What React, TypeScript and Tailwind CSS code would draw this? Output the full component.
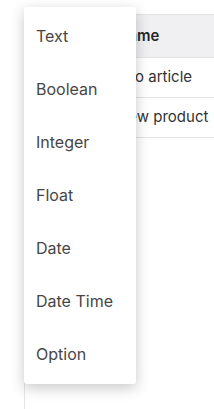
import React from "react";

const items = ["Text", "Boolean", "Integer", "Float", "Date", "Date Time", "Option"];

export default function App() {
  return (
    <div
      className="relative w-[214px] h-[409px] overflow-hidden bg-white"
      style={{ fontFamily: "Inter, 'Noto Sans', sans-serif" }}
    >
      <div className="pt-[14px] pl-[24px] h-full">
        <div className="w-[400px] h-full border-l border-t border-[#e4e4e7]">
          <div className="flex h-[43px] items-center bg-[#f0f0f2] border-b border-[#e4e4e7] pl-[92px] text-[15px] font-semibold text-[#27272a]">
            Name
          </div>
          <div className="flex h-[40px] items-center border-b border-[#e4e4e7] pl-[92px] text-[15px] text-[#333]">
            Info article
          </div>
          <div className="flex h-[40px] items-center border-b border-[#e4e4e7] pl-[92px] text-[15px] text-[#333]">
            New product
          </div>
        </div>
      </div>
      <div className="absolute left-[24px] top-[7px] w-[112px] rounded-[3px] bg-white pt-[2px] pb-[4px] shadow-[0_4px_14px_rgba(0,0,0,0.22)]">
        {items.map((it) => (
          <div key={it} className="flex h-[53px] items-center pl-[12px] text-[16px] text-[#464646]">
            {it}
          </div>
        ))}
      </div>
    </div>
  );
}
